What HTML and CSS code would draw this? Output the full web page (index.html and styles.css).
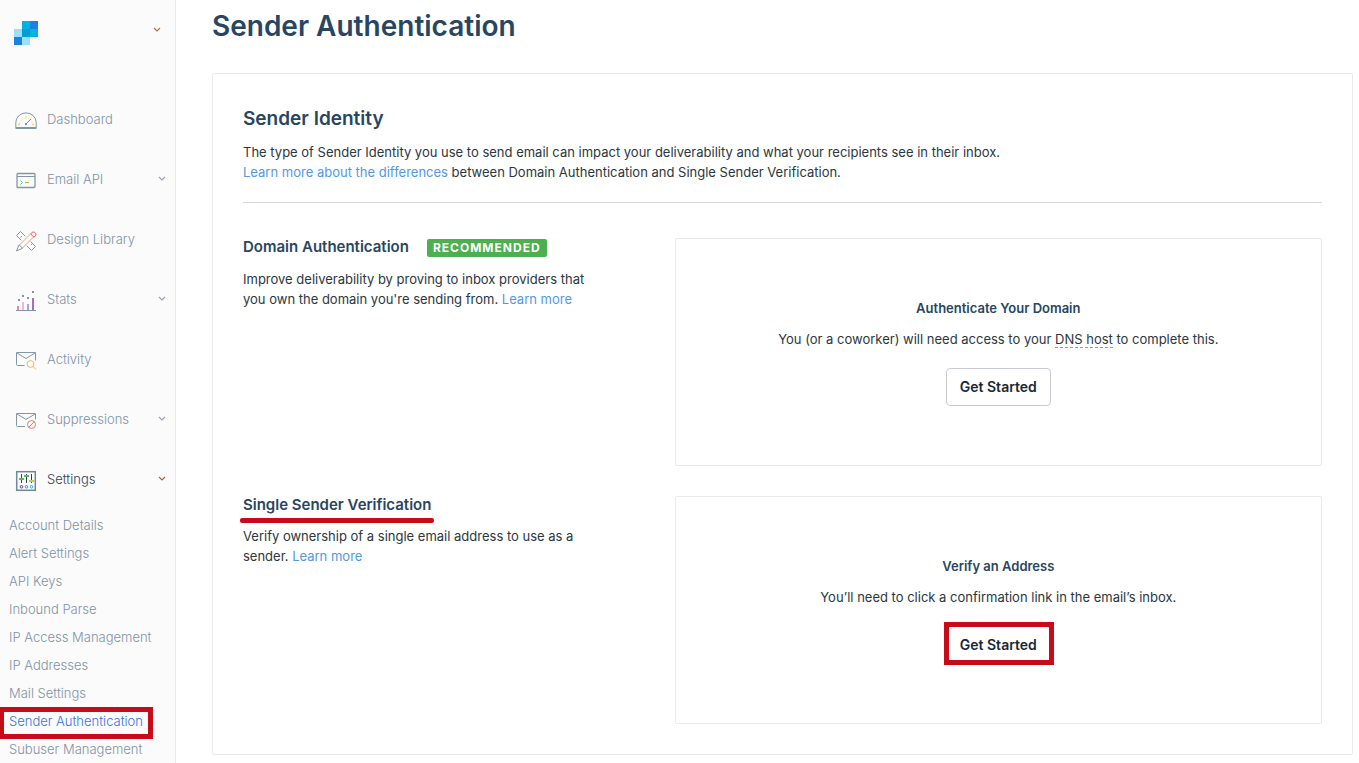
FILE: index.html
```
<!DOCTYPE html>
<html lang="en">

<head>
    <meta charset="UTF-8">
    <meta name="viewport" content="width=device-width, initial-scale=1.0">
    <title>Sender Authentication</title>
    <link rel="stylesheet" href="styles.css">
</head>

<body>

    <aside class="sidebar">
        <button class="account" type="button" aria-label="Account menu">
            <svg class="logo" viewBox="0 0 24 24" shape-rendering="crispEdges">
                <path fill="#00b3e3" d="M8 0h8v8H8zM16 8h8v8h-8z" />
                <path fill="#1a82e2" d="M16 0h8v8h-8zM0 16h8v8H0z" />
                <path fill="#99e1f4" d="M0 8h8v8H0zM8 16h8v8H8z" />
                <path fill="#009dd9" d="M8 8h8v8H8z" />
            </svg>
            <svg class="chevron" viewBox="0 0 8 6"><path d="M1 1l3 3 3-3" /></svg>
        </button>

        <nav>
            <ul class="menu">
                <li>
                    <a href="#">
                        <svg class="icon" viewBox="0 0 22 22">
                            <path d="M.8 18.500v-6a10.200 9.600 0 0 1 20.400 0v6z" />
                            <path d="M1 17.500h20" />
                            <path stroke="#f7d774" stroke-dasharray="1.5 2.4" d="M4.600 14a6.600 7 0 0 1 13 0" />
                            <path stroke="#f7d774" stroke-width="1.400" d="M3 14.500h2M17 14.500h2M11 6v1.600" />
                            <path stroke="#e8604c" d="M11.500 13.500l4.500-4.500" />
                            <path stroke="#4a9be8" stroke-width="2" d="M10 14h2" />
                        </svg>
                        <span>Dashboard</span>
                    </a>
                </li>
                <li>
                    <a href="#">
                        <svg class="icon" viewBox="0 0 22 22">
                            <rect x="2" y="3.500" width="18" height="14" rx="1" stroke-width="1.300" />
                            <path d="M2 6.500h18" />
                            <path stroke="#3fc77a" d="M5.500 10.500l2 2-2 2" />
                            <path stroke="#b6b84a" d="M10 12.500h4" />
                        </svg>
                        <span>Email API</span>
                        <svg class="chevron" viewBox="0 0 8 6"><path d="M1 1l3 3 3-3" /></svg>
                    </a>
                </li>
                <li>
                    <a href="#">
                        <svg class="icon" viewBox="0 0 22 22">
                            <path d="M10.300 6.300L5.500 1.500l-4 4 4.800 4.800M15.700 11.700l4.800 4.800-4 4-4.800-4.800M7 6L5.500 7.500M17.500 13.500L16 15" />
                            <path stroke="#f2a080" d="M4.500 15L16.300 3.200M7.500 18L19.300 6.200" />
                            <path stroke="#e8604c" d="M16 3.500c1.500-3 6.500-1 4.500 2.500l-1.500 1c-1-.5-2.500-1.500-3-3.500z" />
                            <path d="M1.500 21l2.500-6.200 3.500 3.400z" />
                        </svg>
                        <span>Design Library</span>
                    </a>
                </li>
                <li>
                    <a href="#">
                        <svg class="icon" viewBox="0 0 22 22" shape-rendering="crispEdges">
                            <path d="M1 20.500h20" />
                            <path stroke="#ef8a98" stroke-width="2" d="M3 16v4" />
                            <path stroke="#ebb8e4" stroke-width="2" d="M8 12v8" />
                            <path stroke="#a8a0f0" stroke-width="2" d="M13 14v6" />
                            <path stroke="#a66cc8" stroke-width="2" d="M18 8v12" />
                            <path stroke-width="2" d="M3 10h2M7 6h2M12 8h2M17 2h2" />
                        </svg>
                        <span>Stats</span>
                        <svg class="chevron" viewBox="0 0 8 6"><path d="M1 1l3 3 3-3" /></svg>
                    </a>
                </li>
                <li>
                    <a href="#">
                        <svg class="icon" viewBox="0 0 22 22">
                            <path d="M9.500 15.500h-7a1 1 0 0 1-1-1v-12h19v8M2 3l9 5.500L20 3" />
                            <circle cx="15.500" cy="14" r="3.400" stroke="#f5b25a" />
                            <path stroke="#f5b25a" d="M18 16.500l3 3" />
                        </svg>
                        <span>Activity</span>
                    </a>
                </li>
                <li>
                    <a href="#">
                        <svg class="icon" viewBox="0 0 22 22">
                            <path d="M10 16.500H2.500a1 1 0 0 1-1-1v-12h19v6M2 4l9 5.500L20 4" />
                            <circle cx="16.500" cy="14.500" r="4" stroke="#ef7867" />
                            <path stroke="#ef7867" d="M13.800 17.200l5.400-5.400" />
                        </svg>
                        <span>Suppressions</span>
                        <svg class="chevron" viewBox="0 0 8 6"><path d="M1 1l3 3 3-3" /></svg>
                    </a>
                </li>
                <li>
                    <a class="open" href="#">
                        <svg class="icon" viewBox="0 0 22 22">
                            <rect x="1.700" y="1.700" width="18.600" height="18.600" stroke="#6f8798" stroke-width="1.500" />
                            <path stroke="#294661" d="M6.500 4v9M11.500 4v9M16.500 4v9" />
                            <path stroke="#5cb860" stroke-width="2" d="M4 9h5M9 6h5" />
                            <path stroke="#c3cf3c" stroke-width="2" d="M14 11h5" />
                            <circle cx="6.500" cy="16.800" r="1.300" stroke="#3a4a9c" />
                            <circle cx="11.500" cy="16.800" r="1.300" stroke="#3c8fd8" />
                            <circle cx="16.500" cy="16.800" r="1.300" stroke="#14b4dc" />
                        </svg>
                        <span>Settings</span>
                        <svg class="chevron" viewBox="0 0 8 6"><path d="M1 1l3 3 3-3" /></svg>
                    </a>
                    <ul class="submenu">
                        <li><a href="#">Account Details</a></li>
                        <li><a href="#">Alert Settings</a></li>
                        <li><a href="#">API Keys</a></li>
                        <li><a href="#">Inbound Parse</a></li>
                        <li><a href="#">IP Access Management</a></li>
                        <li><a href="#">IP Addresses</a></li>
                        <li><a href="#">Mail Settings</a></li>
                        <li><a class="current" href="#">Sender Authentication</a></li>
                        <li><a href="#">Subuser Management</a></li>
                    </ul>
                </li>
            </ul>
        </nav>
    </aside>

    <main>
        <h1>Sender Authentication</h1>

        <section class="card">
            <header class="intro">
                <h2>Sender Identity</h2>
                <p>The type of Sender Identity you use to send email can impact your deliverability and what your recipients see in their inbox.<br>
                    <a href="#">Learn more about the differences</a> between Domain Authentication and Single Sender Verification.</p>
            </header>

            <div class="row">
                <div class="info">
                    <h3>Domain Authentication <span class="badge">Recommended</span></h3>
                    <p>Improve deliverability by proving to inbox providers that you own the domain you're sending from. <a href="#">Learn more</a></p>
                </div>
                <div class="panel">
                    <h4>Authenticate Your Domain</h4>
                    <p>You (or a coworker) will need access to your <span class="term">DNS host</span> to complete this.</p>
                    <button class="btn" type="button">Get Started</button>
                </div>
            </div>

            <div class="row">
                <div class="info">
                    <h3><span class="underlined">Single Sender Verification</span></h3>
                    <p>Verify ownership of a single email address to use as a sender. <a href="#">Learn more</a></p>
                </div>
                <div class="panel">
                    <h4>Verify an Address</h4>
                    <p>You’ll need to click a confirmation link in the email’s inbox.</p>
                    <button class="btn marked" type="button">Get Started</button>
                </div>
            </div>
        </section>
    </main>

</body>

</html>
```
FILE: styles.css
```
* {
    margin: 0;
    padding: 0;
    box-sizing: border-box;
}

body {
    display: flex;
    min-height: 100vh;
    font: 13px/20px Inter, "Liberation Sans", sans-serif;
    color: #2b3640;
    background: #fff;
}

ul {
    list-style: none;
}

a {
    color: #5297e8;
    text-decoration: none;
}

/* sidebar */
.sidebar {
    flex: 0 0 176px;
    border-right: 1px solid #e9e9e9;
    background: #fbfbfb;
}

.account {
    display: flex;
    justify-content: space-between;
    align-items: flex-start;
    width: 100%;
    height: 90px;
    padding: 21px 14px;
    border: 0;
    background: none;
    cursor: pointer;
}

.logo {
    width: 24px;
    height: 24px;
}

.chevron {
    width: 8px;
    height: 6px;
    fill: none;
    stroke: #94a3b1;
    stroke-width: 1.2;
}

.account .chevron {
    margin-top: 6px;
    stroke: #b5703c;
}

.menu a {
    font-weight: 300;
    color: #8093a5;
}

.menu > li > a {
    display: flex;
    align-items: center;
    height: 60px;
    padding: 0 9px 2px 15px;
}

.menu .chevron {
    margin-left: auto;
}

.icon {
    width: 22px;
    height: 22px;
    margin: 4px 10px 0 0;
    fill: none;
    stroke: #8496a6;
    stroke-width: 1;
}

.menu > li > a.open {
    color: #34424e;
}

.menu .open .chevron {
    stroke: #9a6a3c;
}

.submenu {
    padding-top: 1px;
}

.submenu a {
    display: block;
    padding: 4px 9px;
}

.submenu .current {
    position: relative;
    color: #3a72e0;
}

.current::after {
    content: "";
    position: absolute;
    inset: 0 22px -4px -1px;
    border: 5px solid #c60c18;
}

/* content */
main {
    flex: 1;
    padding: 6px 6px 8px 36px;
}

h1,
h2,
h3,
h4 {
    font-weight: 600;
    color: #294661;
}

h1 {
    margin-bottom: 27px;
    font-size: 28px;
    line-height: 40px;
}

.card {
    padding: 30px;
    border: 1px solid #e9eaec;
    border-radius: 2px;
}

.intro {
    padding-bottom: 20px;
    border-bottom: 1px solid #d5d7de;
    margin-bottom: 35px;
}

h2 {
    margin-bottom: 8px;
    font-size: 19px;
    line-height: 30px;
}

.row {
    display: flex;
}

.row + .row {
    margin-top: 30px;
}

.info {
    flex: 0 0 40%;
    padding-right: 80px;
}

h3 {
    display: flex;
    align-items: baseline;
    margin-bottom: 12px;
    font-size: 15px;
    line-height: 18px;
}

.badge {
    padding: 0 6px;
    margin-left: 18px;
    border-radius: 2px;
    font-size: 12px;
    line-height: 18px;
    font-weight: 700;
    letter-spacing: 1px;
    text-transform: uppercase;
    color: #fff;
    background: #4caf50;
}

.underlined {
    position: relative;
}

.underlined::after {
    content: "";
    position: absolute;
    inset: auto -3px -9px;
    height: 5px;
    border-radius: 2px;
    background: #c60c18;
}

.panel {
    flex: 1;
    padding: 59px 20px;
    border: 1px solid #e9eaec;
    border-radius: 2px;
    text-align: center;
}

h4 {
    margin-bottom: 11px;
    font-size: 13px;
}

.term {
    border-bottom: 1px dashed #8a9bb0;
}

.btn {
    position: relative;
    height: 38px;
    padding: 0 13px;
    margin-top: 19px;
    border: 1px solid #c9c9d6;
    border-radius: 4px;
    font: 600 14px/20px Inter, "Liberation Sans", sans-serif;
    color: #1c2733;
    background: #fff;
    cursor: pointer;
}

.marked::after {
    content: "";
    position: absolute;
    inset: -5px -4px -2px -3px;
    border: 5px solid #c60c18;
}
```
